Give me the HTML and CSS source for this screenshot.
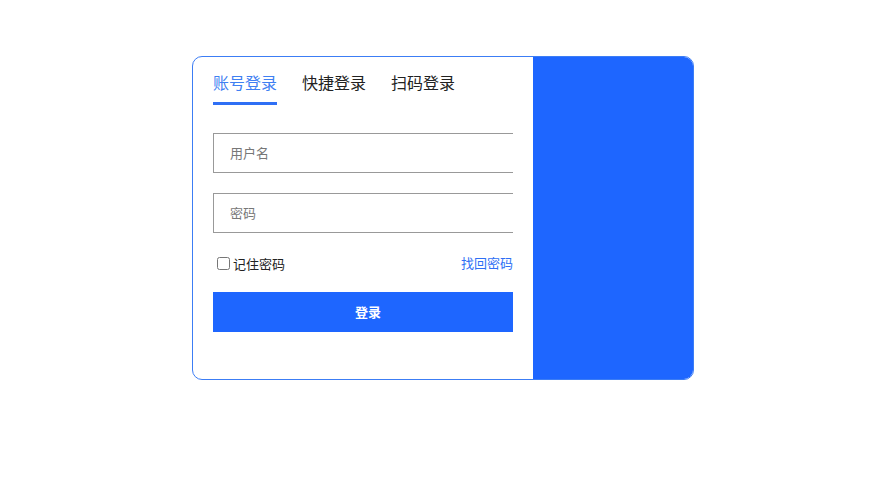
FILE: index.html
```html
<!DOCTYPE html>
<html lang="zh">
<head>
<meta charset="utf-8">
<link rel="stylesheet" href="styles.css">
</head>
<body>
<div class="card">
  <div class="form">
    <div class="tabs">
      <div class="tab active">账号登录</div>
      <div class="tab">快捷登录</div>
      <div class="tab">扫码登录</div>
    </div>
    <div class="field"><input type="text" placeholder="用户名"></div>
    <div class="field"><input type="password" placeholder="密码"></div>
    <div class="row">
      <label class="remember"><input type="checkbox"><span>记住密码</span></label>
      <a class="forgot" href="#">找回密码</a>
    </div>
    <button class="submit">登录</button>
  </div>
  <div class="side"></div>
</div>
</body>
</html>
```
FILE: styles.css
```css
html, body { margin: 0; padding: 0; background: #fff; }
body {
  font-family: "Noto Sans CJK SC", "Noto Sans", sans-serif;
  padding: 56px 0 0 192px;
}
.card {
  width: 500px;
  height: 322px;
  border: 1px solid #3c7df5;
  border-radius: 10px;
  overflow: hidden;
  display: flex;
}
.form {
  width: 300px;
  padding: 0 20px;
  display: flex;
  flex-direction: column;
}
.side {
  width: 160px;
  background: #1e66ff;
}
.tabs {
  display: flex;
  gap: 25px;
  padding-top: 13px;
}
.tab {
  font-size: 16px;
  line-height: 24px;
  color: #222;
  padding-bottom: 8px;
  border-bottom: 3px solid transparent;
}
.tab.active {
  color: #3f80f2;
  border-bottom-color: #2f6ff5;
}
.field {
  margin-top: 28px;
  height: 40px;
  border: 1px solid #999;
  border-right: none;
  box-sizing: border-box;
}
.field + .field { margin-top: 20px; }
.field input {
  width: 100%;
  height: 100%;
  box-sizing: border-box;
  border: none;
  outline: none;
  padding: 0 16px 2px;
  font-family: inherit;
  font-size: 13px;
  color: #333;
  background: transparent;
}
.field input::placeholder { color: #777; }
.row {
  margin-top: 20px;
  height: 20px;
  display: flex;
  justify-content: space-between;
  align-items: center;
  font-size: 13px;
}
.remember {
  display: flex;
  align-items: center;
  color: #222;
  margin-left: 4px;
}
.remember input {
  margin: 0 3px 0 0;
  width: 13px;
  height: 13px;
}
.remember span { position: relative; top: 0; }
.forgot {
  color: #2f6ff5;
  text-decoration: none;
  position: relative;
  top: -1px;
}
.submit {
  margin-top: 19px;
  height: 40px;
  border: none;
  background: #1e66ff;
  color: #fff;
  font-family: inherit;
  font-size: 13px;
  font-weight: 600;
  padding: 0 0 1px 10px;
}
```
